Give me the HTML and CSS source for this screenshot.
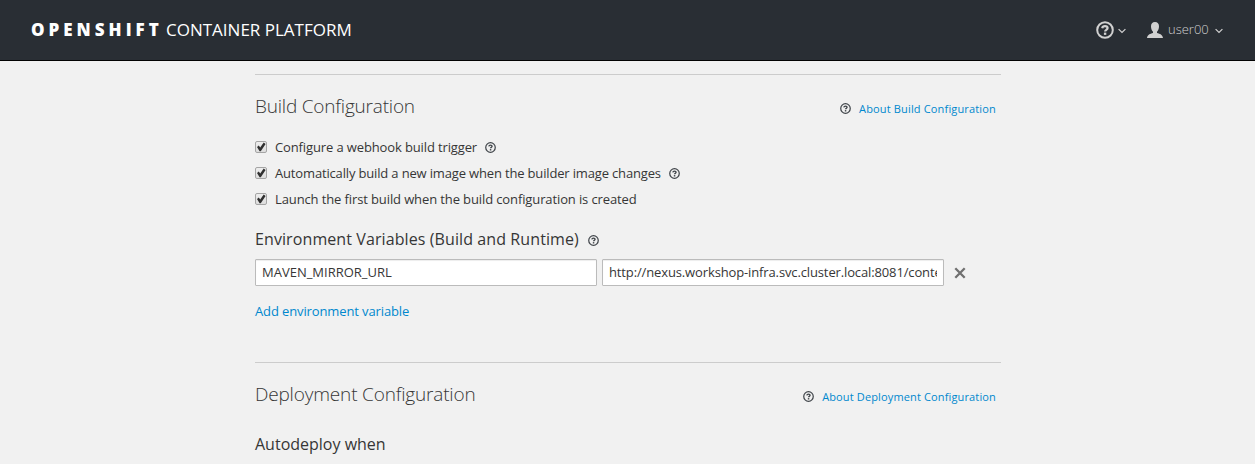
FILE: index.html
```html
<!DOCTYPE html>
<html lang="en">
<head>
<meta charset="utf-8">
<title>OpenShift Container Platform</title>
<link rel="stylesheet" href="styles.css">
</head>
<body>
<svg width="0" height="0" class="defs">
  <symbol id="help" viewBox="0 0 18 18"><circle cx="9" cy="9" r="7.8" fill="none" stroke="currentColor" stroke-width="2"/><path d="M6.200 7.200C6.500 5.800 7.600 5.200 9 5.200c1.600 0 2.600.7 2.600 1.900 0 1.700-2.500 1.700-2.500 3.300" fill="none" stroke="currentColor" stroke-width="2.200"/><path d="M7.900 11.600h2.400v2.300H7.900z" fill="currentColor"/></symbol>
  <symbol id="chevron" viewBox="0 0 8 6"><path d="M.6 1.100 4 4.500l3.400-3.400" fill="none" stroke="currentColor" stroke-width="1.200"/></symbol>
</svg>
<header class="navbar">
  <div class="brand"><span class="brand-strong">OPENSHIFT</span><span class="brand-light">CONTAINER PLATFORM</span></div>
  <nav class="tools">
    <a class="tool"><svg class="help-lg"><use href="#help"/></svg><svg class="chevron"><use href="#chevron"/></svg></a>
    <a class="tool tool-user"><svg class="person" viewBox="0 0 16 16"><path d="M8 0c2.600 0 4 1.700 4 4.300 0 2.400-.8 4.300-2 5.400v1.200c2.800.9 5.700 1.600 6 5.100H0c.3-3.500 3.200-4.200 6-5.100V9.700C4.800 8.600 4 6.700 4 4.300 4 1.700 5.400 0 8 0z" fill="currentColor"/></svg><span class="username">user00</span><svg class="chevron"><use href="#chevron"/></svg></a>
  </nav>
</header>
<main class="content">
  <section class="section build">
    <div class="section-head">
      <h2><span class="build-title">Build Configuration</span></h2>
      <div class="about"><svg class="help"><use href="#help"/></svg><a class="about-build">About Build Configuration</a></div>
    </div>
    <div class="options">
      <label class="option"><input type="checkbox" checked><span class="o1">Configure a webhook build trigger</span><svg class="help"><use href="#help"/></svg></label>
      <label class="option"><input type="checkbox" checked><span class="o2">Automatically build a new image when the builder image changes</span><svg class="help"><use href="#help"/></svg></label>
      <label class="option"><input type="checkbox" checked><span class="o3">Launch the first build when the build configuration is created</span></label>
    </div>
    <h3 class="env-title"><span class="env-text">Environment Variables (Build and Runtime)</span><svg class="help"><use href="#help"/></svg></h3>
    <div class="env-row">
      <input class="field" type="text" value="MAVEN_MIRROR_URL">
      <input class="field field-value" type="text" value="http://nexus.workshop-infra.svc.cluster.local:8081/content/groups/public">
      <svg class="remove" viewBox="0 0 12 12"><path d="M1.300 1.300l9.400 9.400M10.700 1.300l-9.400 9.400" stroke="currentColor" stroke-width="2.300"/></svg>
    </div>
    <a class="add"><span class="add-text">Add environment variable</span></a>
  </section>
  <section class="section">
    <div class="section-head">
      <h2><span class="deploy-title">Deployment Configuration</span></h2>
      <div class="about"><svg class="help"><use href="#help"/></svg><a class="about-deploy">About Deployment Configuration</a></div>
    </div>
    <h3 class="auto"><span class="auto-text">Autodeploy when</span></h3>
  </section>
</main>
</body>
</html>
```
FILE: styles.css
```css
* { box-sizing: border-box; }
html, body { height: 100%; overflow: hidden; }
body { margin: 0; background: #f1f1f1; color: #363636; font: 13px/26px "Open Sans", "Noto Sans", sans-serif; }
svg { flex: none; display: block; }
a { white-space: nowrap; }
.defs { position: absolute; }
.navbar { height: 61px; background: #292e34; border-bottom: 1px solid #030303; display: flex; justify-content: space-between; padding: 0 32px 0 31px; }
.brand { display: flex; align-items: baseline; height: 60px; line-height: 60px; color: #fff; font-size: 17px; white-space: nowrap; }
.brand-strong { font-weight: 800; letter-spacing: 4px; width: 135px; }
.brand-light { letter-spacing: 0; }
.tools { display: flex; height: 59px; color: #d1d1d1; }
.tool { display: flex; align-items: center; }
.tool-user { margin-left: 21px; }
.help-lg { width: 18px; height: 18px; }
.chevron { width: 8px; height: 6px; margin: 2px 0 0 4px; }
.person { width: 16px; height: 16px; margin-top: 1px; }
.username { margin-left: 5px; width: 43px; font-weight: 300; line-height: 20px; margin-top: -1px; }
.content { width: 746px; margin: 13px 0 0 255px; }
.section { border-top: 1px solid #ccc; }
.build { height: 288px; }
.section-head { display: flex; justify-content: space-between; height: 59px; padding: 18px 5px 0 0; }
h2 { margin: 0; font-size: 19px; line-height: 27px; font-weight: 300; white-space: nowrap; }
.build-title { letter-spacing: -.2px; }
.deploy-title { letter-spacing: -.18px; }
.about { display: flex; align-items: center; height: 32px; font-size: 11px; line-height: 32px; }
.about .help { margin: -1px 8px 0 0; }
.about a, .add { color: #0088ce; }
.about-build { letter-spacing: .16px; }
.about-deploy { letter-spacing: .14px; }
.help { width: 11px; height: 11px; color: #40454a; }
.option { display: flex; align-items: center; height: 26px; white-space: nowrap; }
.o1 { letter-spacing: -.125px; }
.o2 { letter-spacing: -.16px; }
.o3 { letter-spacing: -.115px; }
.option .help { margin-left: 8px; }
.option input { appearance: none; width: 12px; height: 12px; margin: 0 8px 0 0; border: 1px solid #a5a5a5; border-radius: 2px; background: linear-gradient(#eee, #ddd); display: grid; place-items: center; }
.option input::before { content: ""; width: 10px; height: 10px; background: #303030; clip-path: polygon(10% 49%, 28% 35%, 42% 56%, 77% 5%, 96% 19%, 48% 92%, 36% 92%); }
h3 { margin: 0; font-size: 16px; font-weight: 400; line-height: 26px; display: flex; align-items: center; white-space: nowrap; }
.env-title { height: 26px; margin-top: 14px; }
.env-text { letter-spacing: .095px; }
.env-title .help { margin: 2px 0 0 9px; }
.env-row { display: flex; align-items: center; gap: 5px; margin-top: 7px; height: 27px; }
.field { width: 342px; height: 27px; padding: 1px 6px 2px; border: 1px solid #bbb; border-radius: 1px; box-shadow: inset 0 1px 1px rgba(3, 3, 3, .075); background: #fff; color: #363636; font: inherit; line-height: 20px; }
.field-value { letter-spacing: -.13px; }
.remove { width: 12px; height: 12px; color: #707070; margin-left: 5px; }
.add { display: block; margin-top: 12px; }
.add-text { letter-spacing: -.12px; }
.auto { margin-top: 9px; }
```
